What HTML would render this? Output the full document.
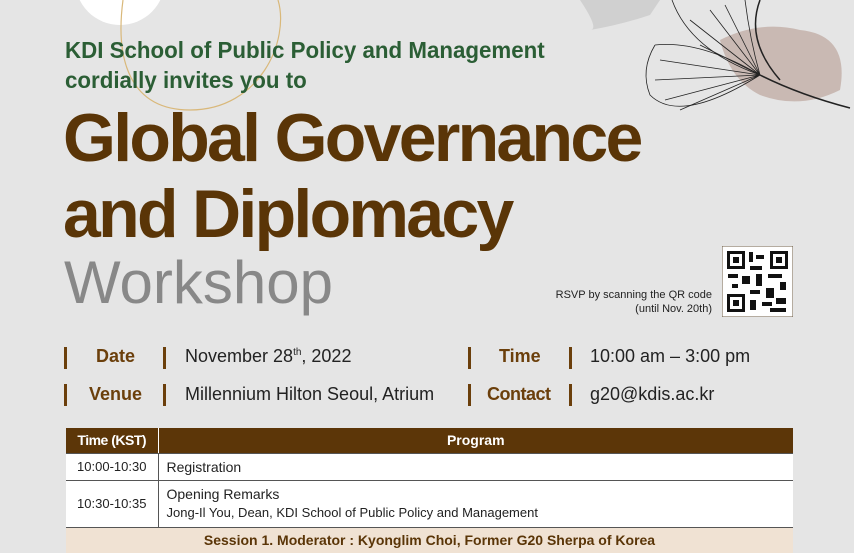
<!DOCTYPE html>
<html><head><style>
body{margin:0;width:854px;height:551px;overflow:hidden;background:#e5e5e5;font-family:"Liberation Sans",sans-serif;position:relative}
.a{position:absolute;white-space:nowrap}
.g{color:#2b5e35;font-weight:bold;font-size:23px;left:65px;transform:scaleX(0.97);transform-origin:0 0}
.t{color:#5a3507;font-weight:bold;font-size:68px;left:63px;letter-spacing:-2.7px}
.bar{position:absolute;width:3px;height:22px;background:#6b3f0b}
.lb{color:#6b3f0b;font-weight:bold;font-size:18px}
.vl{color:#222;font-size:18px}
table{position:absolute;left:66px;top:428px;width:727px;border-collapse:collapse;font-size:14px;color:#222;table-layout:fixed}
td{padding:0 8px;border-bottom:1px solid #555;white-space:nowrap;overflow:hidden}
</style></head><body>
<svg class="a" style="left:0;top:0" width="854" height="330">
<circle cx="120" cy="-20" r="45" fill="#fff"/>
<path d="M123 0 C115 60 130 110 190 110 C260 110 290 40 278 0" fill="none" stroke="#d9b87a" stroke-width="1.2"/>
<path d="M580 0 Q600 30 590 30 Q620 25 650 15 L660 0Z" fill="#d0d0d0"/>
<path d="M720 40 Q760 20 800 30 Q850 35 840 90 Q800 110 760 95 Q730 80 720 40Z" fill="#c9b9b3"/>
<g stroke="#222" stroke-width="0.8" fill="none">
<path d="M655 45 Q640 70 650 95 Q680 125 760 75"/>
<path d="M655 45 Q700 40 760 75"/>
<path d="M672 0 Q690 50 760 75"/>
<path d="M745 0 Q750 40 760 75"/>
<path d="M660 60 L760 75 M655 80 L760 75 M665 100 L760 75 M680 110 L760 75 M700 45 L760 75 M690 20 L760 75 M710 10 L760 75 M725 5 L760 75"/>
<path d="M760 75 Q800 95 850 108" stroke-width="1.5"/>
<path d="M760 0 Q745 40 780 80" stroke-width="1.5"/>
</g>
</svg>
<div class="a g" style="top:37px">KDI School of Public Policy and Management</div>
<div class="a g" style="top:67px">cordially invites you to</div>
<div class="a t" style="top:99px">Global Governance</div>
<div class="a t" style="top:175px">and Diplomacy</div>
<div class="a" style="left:64px;top:248px;font-size:60px;color:#888">Workshop</div>
<div class="a" style="right:142px;top:288px;font-size:11px;color:#222;text-align:right;line-height:14px">RSVP by scanning the QR code<br>(until Nov. 20th)</div>
<svg class="a" style="left:722px;top:246px" width="71" height="71" viewBox="0 0 71 71">
<rect width="71" height="71" fill="#fff" stroke="#6b5a40"/>
<g fill="#111"><rect x="5" y="5" width="18" height="18"/><rect x="48" y="5" width="18" height="18"/><rect x="5" y="48" width="18" height="18"/></g>
<g fill="#fff"><rect x="8" y="8" width="12" height="12"/><rect x="51" y="8" width="12" height="12"/><rect x="8" y="51" width="12" height="12"/></g>
<g fill="#111"><rect x="11" y="11" width="6" height="6"/><rect x="54" y="11" width="6" height="6"/><rect x="11" y="54" width="6" height="6"/>
<rect x="27" y="6" width="4" height="10"/><rect x="34" y="9" width="8" height="4"/><rect x="28" y="20" width="12" height="4"/><rect x="6" y="28" width="10" height="4"/><rect x="20" y="30" width="8" height="8"/><rect x="34" y="28" width="6" height="12"/><rect x="46" y="28" width="14" height="4"/><rect x="58" y="36" width="6" height="8"/><rect x="10" y="38" width="6" height="4"/><rect x="28" y="44" width="10" height="4"/><rect x="44" y="42" width="8" height="10"/><rect x="28" y="54" width="6" height="10"/><rect x="40" y="56" width="10" height="4"/><rect x="54" y="52" width="10" height="6"/><rect x="48" y="62" width="16" height="4"/></g>
</svg>
<div class="bar" style="left:64px;top:347px"></div><div class="bar" style="left:163px;top:347px"></div>
<div class="bar" style="left:468px;top:347px"></div><div class="bar" style="left:569px;top:347px"></div>
<div class="bar" style="left:64px;top:384px"></div><div class="bar" style="left:163px;top:384px"></div>
<div class="bar" style="left:468px;top:384px"></div><div class="bar" style="left:569px;top:384px"></div>
<div class="a lb" style="left:96px;top:346px">Date</div>
<div class="a vl" style="left:185px;top:346px">November 28<sup style="font-size:10px">th</sup>, 2022</div>
<div class="a lb" style="left:499px;top:346px">Time</div>
<div class="a vl" style="left:590px;top:346px">10:00 am – 3:00 pm</div>
<div class="a lb" style="left:89px;top:384px">Venue</div>
<div class="a vl" style="left:185px;top:384px">Millennium Hilton Seoul, Atrium</div>
<div class="a lb" style="left:487px;top:384px;letter-spacing:-0.5px">Contact</div>
<div class="a vl" style="left:590px;top:384px">g20@kdis.ac.kr</div>
<table>
<colgroup><col style="width:92px"><col></colgroup>
<tr style="background:#5c3608;color:#fff;font-weight:bold;height:25px"><td style="text-align:center;border-right:1px solid #fff;padding:0;letter-spacing:-0.5px">Time (KST)</td><td style="text-align:center">Program</td></tr>
<tr style="background:#fff;height:27px"><td style="text-align:center;border-right:1px solid #555;padding:0;font-size:13px">10:00-10:30</td><td>Registration</td></tr>
<tr style="background:#fff;height:47px"><td style="text-align:center;border-right:1px solid #555;padding:0;font-size:13px">10:30-10:35</td><td style="line-height:18px">Opening Remarks<br><span style="font-size:13px">Jong-Il You, Dean, KDI School of Public Policy and Management</span></td></tr>
<tr style="background:#f0e2d3;height:26px"><td colspan="2" style="text-align:center;font-weight:bold;color:#5a3507;border:none">Session 1. Moderator : Kyonglim Choi, Former G20 Sherpa of Korea</td></tr>
</table>
</body></html>
